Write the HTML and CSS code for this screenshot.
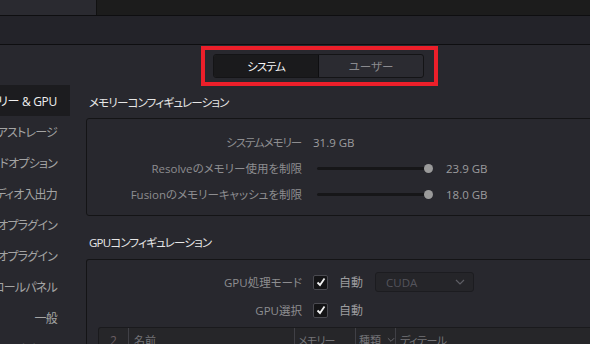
FILE: index.html
```html
<!DOCTYPE html>
<html lang="ja">
<head>
  <meta charset="UTF-8" />
  <title>環境設定</title>
  <link rel="stylesheet" href="styles.css">
</head>
<body>
  <div class="topbar">
    <div class="top-tab"></div>
    <div class="top-rest"></div>
  </div>
  <div class="band"></div>

  <div class="main">
    <div class="sidebar">
      <div class="side-item active">メモリー &amp; GPU</div>
      <div class="side-item">メディアストレージ</div>
      <div class="side-item">デコードオプション</div>
      <div class="side-item">ビデオ・オーディオ入出力</div>
      <div class="side-item">ビデオプラグイン</div>
      <div class="side-item">オーディオプラグイン</div>
      <div class="side-item">コントロールパネル</div>
      <div class="side-item">一般</div>
      <div class="side-item">インターネットアカウント</div>
    </div>

    <div class="content">
      <!-- highlight frame around the tab switch -->
      <div class="seg-frame">
        <div class="segmented">
          <div class="seg active">システム</div>
          <div class="seg">ユーザー</div>
        </div>
      </div>

      <div class="section-title">メモリーコンフィギュレーション</div>
      <div class="panel mem-panel">
        <div class="row">
          <div class="label kana">システムメモリー</div>
          <div class="value">31.9 GB</div>
        </div>
        <div class="row">
          <div class="label">Resolveのメモリー使用を制限</div>
          <div class="slider"><div class="track"></div><div class="thumb"></div></div>
          <div class="value slider-value">23.9 GB</div>
        </div>
        <div class="row">
          <div class="label">Fusionのメモリーキャッシュを制限</div>
          <div class="slider"><div class="track"></div><div class="thumb"></div></div>
          <div class="value slider-value">18.0 GB</div>
        </div>
      </div>

      <div class="section-title gpu-title">GPUコンフィギュレーション</div>
      <div class="panel gpu-panel">
        <div class="row gpu-row">
          <div class="label">GPU処理モード</div>
          <div class="checkbox">
            <svg width="12" height="12" viewBox="0 0 12 12"><polyline points="2.5,6.5 5,9 9.5,2.5" fill="none" stroke="#f2f2f2" stroke-width="1.8"/></svg>
          </div>
          <div class="check-text">自動</div>
          <div class="dropdown">
            <span>CUDA</span>
            <svg width="10" height="6" viewBox="0 0 10 6"><polyline points="1,1 5,5 9,1" fill="none" stroke="#5e5e64" stroke-width="1.2"/></svg>
          </div>
        </div>
        <div class="row gpu-row">
          <div class="label">GPU選択</div>
          <div class="checkbox">
            <svg width="12" height="12" viewBox="0 0 12 12"><polyline points="2.5,6.5 5,9 9.5,2.5" fill="none" stroke="#f2f2f2" stroke-width="1.8"/></svg>
          </div>
          <div class="check-text">自動</div>
        </div>

        <div class="gpu-table">
          <div class="th th-num">2</div>
          <div class="th th-name">名前</div>
          <div class="th th-mem">メモリー</div>
          <div class="th th-type">種類
            <svg width="9" height="6" viewBox="0 0 9 6"><polyline points="1,1 4.5,4.5 8,1" fill="none" stroke="#6a6a70" stroke-width="1.1"/></svg>
          </div>
          <div class="th th-detail">ディテール</div>
        </div>
      </div>
    </div>
  </div>
</body>
</html>
```

FILE: styles.css
```css
html,body{margin:0;width:590px;height:344px;overflow:hidden;background:#28282e}
body {
  font-family: "Open Sans", "Noto Sans CJK JP", sans-serif;
  font-feature-settings: "palt";
  font-size: 11px;
  color: #9a9a9a;
}

/* Top strips */
.topbar {
  display: flex;
  height: 15px;
  border-bottom: 1px solid #0e0e10;
}
.top-tab {
  width: 96px;
  background: #2a2a30;
  border-right: 1px solid #111;
}
.top-rest {
  flex: 1;
  background: #1c1c1c;
}
.band {
  height: 28px;
  background: #232329;
  border-bottom: 1px solid #0e0e10;
}

.main {
  display: flex;
}

/* Sidebar */
.sidebar {
  width: 70px;
  flex-shrink: 0;
  padding-top: 40px;
  overflow: hidden;
}
.side-item {
  display: flex;
  justify-content: flex-end;
  align-items: center;
  height: 31px;
  padding-right: 13px;
  white-space: nowrap;
  color: #a4a4a4;
  font-size: 12px;
  letter-spacing: -0.8px;
}
.side-item.active {
  background: #1c1c1f;
  color: #f0f0f0;
  letter-spacing: -0.3px;
}

/* Content */
.content {
  flex: 1;
  padding-left: 16px;
  min-width: 0;
}

.seg-frame {
  margin-top: 1px;
  margin-left: 115px;
  width: 237px;
  height: 40px;
  box-sizing: border-box;
  border: 4px solid #ec1f2a;
  padding: 4px 10px 0 8px;
}
.segmented {
  display: flex;
  height: 22px;
  border: 1px solid #141416;
  border-radius: 3px;
  overflow: hidden;
  background: #2b2b31;
}
.seg {
  flex: 1;
  display: flex;
  align-items: center;
  justify-content: center;
  color: #8a8a8e;
  font-size: 11.5px;
}
.seg.active {
  background: #1a1a1c;
  color: #f4f4f4;
  border-right: 1px solid #0e0e10;
  letter-spacing: -1px;
}

.section-title {
  margin-top: 9px;
  margin-left: 3px;
  height: 16px;
  line-height: 16px;
  color: #e6e6e6;
  font-size: 11.5px;
  letter-spacing: -0.8px;
  margin-bottom: 7px;
}
.gpu-title {
  margin-top: 19px;
  margin-bottom: 8px;
}

.panel {
  border: 1px solid #141416;
  border-radius: 3px;
  margin-right: -10px;
}
.mem-panel {
  padding: 10px 0 8px;
}
.gpu-panel {
  padding-top: 8px;
  border-bottom: none;
  height: 120px;
}

.row {
  display: flex;
  align-items: center;
  height: 26px;
}
.gpu-row {
  height: 28px;
}
.label {
  width: 215px;
  text-align: right;
  white-space: nowrap;
  color: #8d8d90;
  font-size: 11.5px;
}
.label.kana {
  letter-spacing: -1.1px;
  padding-right: 1px;
  box-sizing: border-box;
}
.value {
  margin-left: 11px;
  color: #9c9c9e;
  white-space: nowrap;
  font-size: 11.5px;
}

.slider {
  position: relative;
  width: 113px;
  height: 9px;
  margin-left: 15px;
}
.track {
  margin-top: 3px;
  height: 3px;
  border-radius: 2px;
  background: #161618;
}
.thumb {
  position: absolute;
  right: -3px;
  top: 0;
  width: 9px;
  height: 9px;
  border-radius: 50%;
  background: #9a9a9a;
}
.slider-value {
  margin-left: 16px;
}

.checkbox {
  width: 13px;
  height: 13px;
  margin-left: 11px;
  border: 1px solid #4a4a50;
  border-radius: 2px;
  background: #141416;
  display: flex;
  align-items: center;
  justify-content: center;
}
.check-text {
  margin-left: 11px;
  color: #9c9c9e;
  font-size: 12px;
}
.dropdown {
  margin-left: 12px;
  width: 99px;
  height: 20px;
  box-sizing: border-box;
  border: 1px solid #1c1c20;
  border-radius: 3px;
  background: #252529;
  display: flex;
  align-items: center;
  justify-content: space-between;
  padding: 0 8px 0 10px;
  color: #54545c;
  font-size: 11.5px;
}

.gpu-table {
  display: flex;
  margin: 3px 0 0 11px;
  height: 24px;
  border: 1px solid #1a1a1d;
  border-bottom: none;
  border-radius: 3px 0 0 0;
  background: #262629;
}
.th {
  display: flex;
  align-items: center;
  height: 22px;
  padding-top: 1px;
  color: #747478;
  white-space: nowrap;
  border-left: 1px solid #404046;
  overflow: hidden;
}
.th-num {
  width: 29px;
  justify-content: center;
  border-left: none;
  color: #6a5d62;
  font-size: 12px;
}
.th-name {
  width: 160px;
  padding-left: 5px;
}
.th-mem {
  width: 57px;
  padding-left: 3px;
  letter-spacing: -0.8px;
}
.th-type {
  width: 36px;
  padding-left: 3px;
  gap: 6px;
}
.th-detail {
  flex: 1;
  padding-left: 4px;
  letter-spacing: -0.5px;
}
```
